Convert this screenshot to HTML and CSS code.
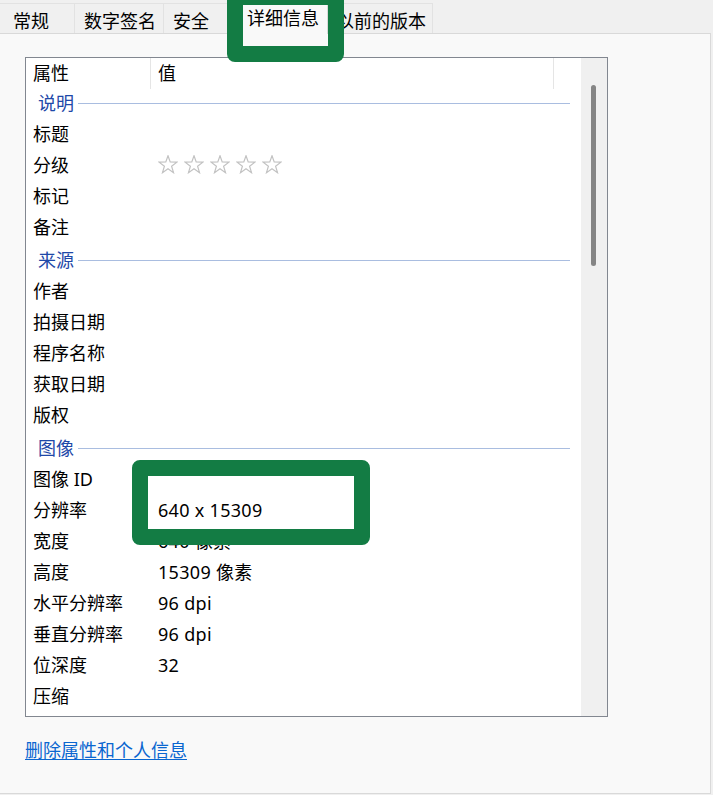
FILE: index.html
```html
<!DOCTYPE html>
<html lang="zh-CN">
<head>
<meta charset="utf-8">
<title>详细信息</title>
<link rel="stylesheet" href="styles.css">
</head>
<body>
<div class="window">
  <div class="tabs">
    <div class="tab t1">常规</div>
    <div class="tab t2">数字签名</div>
    <div class="tab t3">安全</div>
    <div class="tab t4 selected">详细信息</div>
    <div class="tab t5">以前的版本</div>
  </div>
  <div class="panel">
    <div class="list">
      <div class="list-main">
        <div class="header">
          <div class="hcell hname">属性</div>
          <div class="hcell hvalue">值</div>
          <div class="hcell hrest"></div>
        </div>
        <div class="group first"><span class="gtext">说明</span><span class="gline"></span></div>
        <div class="row"><span class="name">标题</span><span class="value"></span></div>
        <div class="row"><span class="name">分级</span><span class="value stars">
          <svg class="star" viewBox="0 0 20 19"><polygon points="10,0.8 12.2,7 18.9,7.1 13.6,11.2 15.5,17.7 10,13.8 4.5,17.7 6.4,11.2 1.1,7.1 7.8,7"/></svg>
          <svg class="star" viewBox="0 0 20 19"><polygon points="10,0.8 12.2,7 18.9,7.1 13.6,11.2 15.5,17.7 10,13.8 4.5,17.7 6.4,11.2 1.1,7.1 7.8,7"/></svg>
          <svg class="star" viewBox="0 0 20 19"><polygon points="10,0.8 12.2,7 18.9,7.1 13.6,11.2 15.5,17.7 10,13.8 4.5,17.7 6.4,11.2 1.1,7.1 7.8,7"/></svg>
          <svg class="star" viewBox="0 0 20 19"><polygon points="10,0.8 12.2,7 18.9,7.1 13.6,11.2 15.5,17.7 10,13.8 4.5,17.7 6.4,11.2 1.1,7.1 7.8,7"/></svg>
          <svg class="star" viewBox="0 0 20 19"><polygon points="10,0.8 12.2,7 18.9,7.1 13.6,11.2 15.5,17.7 10,13.8 4.5,17.7 6.4,11.2 1.1,7.1 7.8,7"/></svg>
        </span></div>
        <div class="row"><span class="name">标记</span><span class="value"></span></div>
        <div class="row"><span class="name">备注</span><span class="value"></span></div>
        <div class="group"><span class="gtext">来源</span><span class="gline"></span></div>
        <div class="row"><span class="name">作者</span><span class="value"></span></div>
        <div class="row"><span class="name">拍摄日期</span><span class="value"></span></div>
        <div class="row"><span class="name">程序名称</span><span class="value"></span></div>
        <div class="row"><span class="name">获取日期</span><span class="value"></span></div>
        <div class="row"><span class="name">版权</span><span class="value"></span></div>
        <div class="group"><span class="gtext">图像</span><span class="gline"></span></div>
        <div class="row"><span class="name">图像 ID</span><span class="value"></span></div>
        <div class="row"><span class="name">分辨率</span><span class="value">640 x 15309</span></div>
        <div class="row"><span class="name">宽度</span><span class="value">640 像素</span></div>
        <div class="row"><span class="name">高度</span><span class="value">15309 像素</span></div>
        <div class="row"><span class="name">水平分辨率</span><span class="value">96 dpi</span></div>
        <div class="row"><span class="name">垂直分辨率</span><span class="value">96 dpi</span></div>
        <div class="row"><span class="name">位深度</span><span class="value">32</span></div>
        <div class="row"><span class="name">压缩</span><span class="value"></span></div>
      </div>
      <div class="scrollbar"><div class="thumb"></div></div>
    </div>
    <a class="link" href="#">删除属性和个人信息</a>
  </div>
  <div class="mark mark-tab"></div>
  <div class="mark mark-res"></div>
</div>
</body>
</html>
```
FILE: styles.css
```css
* { box-sizing: border-box; }
html, body {
  margin: 0;
  padding: 0;
  background: #f0f0f0;
}
body {
  font-family: "Noto Sans", "Noto Sans CJK SC", sans-serif;
  font-size: 18px;
  color: #000;
}
.window {
  position: relative;
  width: 713px;
  height: 795px;
  overflow: hidden;
}
.tabs {
  display: flex;
  align-items: flex-end;
  height: 33px;
}
.tab {
  height: 30px;
  display: flex;
  align-items: center;
  padding-top: 4px;
  border-top: 1px solid #e2e2e2;
  border-right: 1px solid #e2e2e2;
  background: #f0f0f0;
  white-space: nowrap;
  line-height: 1;
}
.t1 { width: 75px; padding-left: 13px; }
.t2 { width: 89px; padding-left: 9px; }
.t3 { width: 70px; padding-left: 9px; }
.t4 { width: 94px; padding-left: 12px; }
.t5 { width: 105px; padding-left: 8px; }
.tab.selected {
  height: 34px;
  margin-bottom: -1px;
  padding-top: 0;
  background: #f9f9f9;
  border-left: 1px solid #d9d9d9;
  border-top: 1px solid #d9d9d9;
  border-right: 1px solid #d9d9d9;
  position: relative;
  z-index: 1;
}
.panel {
  width: 711px;
  height: 761px;
  background: #f9f9f9;
  border-top: 1px solid #d9d9d9;
  border-right: 1px solid #d9d9d9;
  border-bottom: 1px solid #d9d9d9;
  padding: 23px 0 0 25px;
}
.list {
  width: 583px;
  height: 660px;
  border: 1px solid #828790;
  background: #fff;
  display: flex;
  overflow: hidden;
}
.list-main {
  flex: 1;
  min-width: 0;
}
.header {
  display: flex;
  height: 31px;
}
.hcell {
  height: 31px;
  display: flex;
  align-items: center;
  padding-left: 7px;
  padding-bottom: 1px;
  line-height: 1;
}
.hname { width: 125px; border-right: 1px solid #e5e5e5; }
.hvalue { width: 403px; border-right: 1px solid #e5e5e5; }
.hrest { flex: 1; }
.group {
  height: 30px;
  display: flex;
  align-items: center;
  gap: 4px;
  padding: 0 11px 1px 12px;
  margin-top: 3px;
}
.group.first { margin-top: 0; }
.gtext {
  color: #1e48a8;
  line-height: 1;
  padding-bottom: 1px;
}
.gline {
  flex: 1;
  height: 1px;
  background: #a9bde0;
}
.row {
  height: 31px;
  display: grid;
  grid-template-columns: 125px 1fr;
  align-items: center;
  line-height: 1;
  padding-bottom: 2px;
}
.name, .value {
  padding-left: 7px;
  white-space: nowrap;
}
.value {
  letter-spacing: 0.3px;
}
.stars {
  display: flex;
  gap: 6px;
  padding-left: 7px;
}
.star {
  width: 20px;
  height: 19px;
  fill: none;
  stroke: #c2c2c2;
  stroke-width: 1.2;
  display: block;
}
.scrollbar {
  width: 26px;
  background: #f0f0f0;
  padding: 27px 0 0 10px;
}
.thumb {
  width: 5px;
  height: 181px;
  background: #858585;
  border-radius: 3px;
}
.link {
  display: inline-block;
  margin-top: 21px;
  line-height: 24px;
  color: #0a66d0;
  text-decoration: underline;
  text-underline-offset: 2px;
}
.mark {
  position: absolute;
  border: 16px solid #137c44;
  border-radius: 8px;
  z-index: 5;
}
.mark-tab {
  left: 227px;
  top: -11px;
  width: 117px;
  height: 73px;
}
.mark-res {
  left: 132px;
  top: 460px;
  width: 238px;
  height: 85px;
}
```
